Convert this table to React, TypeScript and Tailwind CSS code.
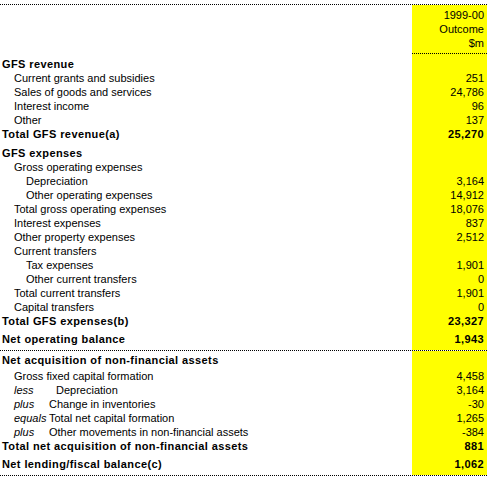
import React from "react";

type RowProps = {
  label?: string;
  value?: string;
  bold?: boolean;
  indent?: 0 | 1 | 2;
  pt?: string;
  prefix?: string;
  shift?: boolean;
};

function Row({ label = "", value = "", bold = false, indent = 1, pt = "", prefix, shift }: RowProps) {
  const ind = indent === 0 ? "pl-[2px]" : indent === 1 ? "pl-[14px]" : "pl-[26px]";
  return (
    <div className="flex">
      <div className={`w-[412px] ${pt} ${ind} whitespace-nowrap overflow-hidden ${bold ? "font-bold tracking-[0.4px]" : ""}`}>
        {prefix !== undefined ? (
          <span className="flex">
            <span className="w-[35px] italic">{prefix}</span>
            <span className={shift ? "pl-[7px]" : ""}>{label}</span>
          </span>
        ) : (
          label
        )}
      </div>
      <div className={`w-[75px] ${pt} pr-[3px] text-right bg-[#ffff00] ${bold ? "font-bold tracking-[0.4px]" : ""}`}>{value}</div>
    </div>
  );
}

export default function App() {
  return (
    <div className="w-[488px] h-[479px] bg-white text-black text-[11px] leading-[14px] font-['Liberation_Sans',Arial,sans-serif]">
      <div className="h-[4px]" />
      <div className="w-[487px] border-t border-dotted border-black" />
      <div className="flex">
        <div className="w-[412px]" />
        <div className="w-[75px] bg-[#ffff00] pt-[3px] pb-[3px] pr-[3px] text-right border-b border-dotted border-black">
          <div>1999-00</div>
          <div>Outcome</div>
          <div>$m</div>
        </div>
      </div>
      <Row label="GFS revenue" bold indent={0} pt="pt-[3px]" />
      <Row label="Current grants and subsidies" value="251" />
      <Row label="Sales of goods and services" value="24,786" />
      <Row label="Interest income" value="96" />
      <Row label="Other" value="137" />
      <Row label="Total GFS revenue(a)" value="25,270" bold indent={0} />
      <Row label="GFS expenses" bold indent={0} pt="pt-[5px]" />
      <Row label="Gross operating expenses" />
      <Row label="Depreciation" value="3,164" indent={2} />
      <Row label="Other operating expenses" value="14,912" indent={2} />
      <Row label="Total gross operating expenses" value="18,076" />
      <Row label="Interest expenses" value="837" />
      <Row label="Other property expenses" value="2,512" />
      <Row label="Current transfers" />
      <Row label="Tax expenses" value="1,901" indent={2} />
      <Row label="Other current transfers" value="0" indent={2} />
      <Row label="Total current transfers" value="1,901" />
      <Row label="Capital transfers" value="0" />
      <Row label="Total GFS expenses(b)" value="23,327" bold indent={0} />
      <Row label="Net operating balance" value="1,943" bold indent={0} pt="pt-[4px]" />
      <div className="flex">
        <div className="w-[412px] h-[4px]" />
        <div className="w-[75px] h-[4px] bg-[#ffff00]" />
      </div>
      <div className="w-[487px] border-t border-dotted border-black" />
      <Row label="Net acquisition of non-financial assets" bold indent={0} pt="pt-[2px]" />
      <Row label="Gross fixed capital formation" value="4,458" pt="pt-[2px]" />
      <Row prefix="less" shift label="Depreciation" value="3,164" />
      <Row prefix="plus" label="Change in inventories" value="-30" />
      <Row prefix="equals" label="Total net capital formation" value="1,265" />
      <Row prefix="plus" label="Other movements in non-financial assets" value="-384" />
      <Row label="Total net acquisition of non-financial assets" value="881" bold indent={0} />
      <Row label="Net lending/fiscal balance(c)" value="1,062" bold indent={0} pt="pt-[4px]" />
      <div className="flex">
        <div className="w-[412px] h-[4px]" />
        <div className="w-[75px] h-[4px] bg-[#ffff00]" />
      </div>
      <div className="w-[487px] border-t border-dotted border-black" />
    </div>
  );
}
